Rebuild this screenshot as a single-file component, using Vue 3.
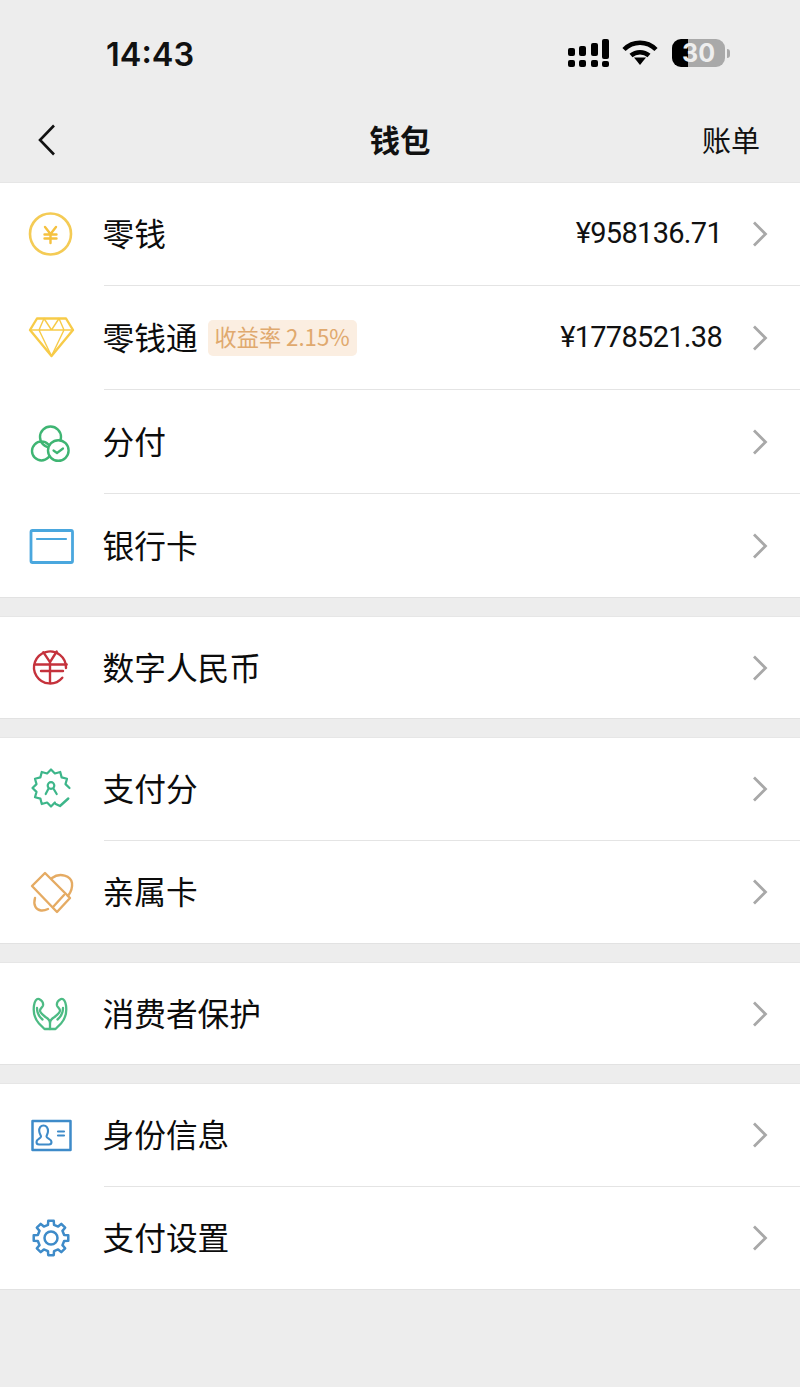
<script setup>
const groups = [
  [
    { icon: 'coin', label: '零钱', value: '¥958136.71' },
    { icon: 'diamond', label: '零钱通', tag: '收益率 2.15%', value: '¥1778521.38' },
    { icon: 'fenfu', label: '分付' },
    { icon: 'card', label: '银行卡' },
  ],
  [{ icon: 'rmb', label: '数字人民币' }],
  [
    { icon: 'badge', label: '支付分' },
    { icon: 'family', label: '亲属卡' },
  ],
  [{ icon: 'hands', label: '消费者保护' }],
  [
    { icon: 'id', label: '身份信息' },
    { icon: 'gear', label: '支付设置' },
  ],
]

function polar(cx, cy, r, deg) {
  const a = ((deg - 90) * Math.PI) / 180
  return `${(cx + r * Math.cos(a)).toFixed(2)} ${(cy + r * Math.sin(a)).toFixed(2)}`
}

// scalloped outline of the badge, open at the lower right for the tick
function badgePath() {
  const pts = []
  for (let d = 165; d <= 460; d += 15) {
    pts.push(polar(24, 23, (d / 15) % 2 === 0 ? 18.500 : 15, d))
  }
  return 'M' + pts.join('L')
}

function gearPath() {
  const pts = []
  for (let i = 0; i < 8; i++) {
    const c = i * 45
    pts.push(polar(24, 24, 13.5, c - 13), polar(24, 24, 17.5, c - 9), polar(24, 24, 17.5, c + 9), polar(24, 24, 13.5, c + 13))
  }
  return 'M' + pts.join('L') + 'Z'
}
</script>

<template>
  <div class="page">
    <header class="status">
      <span class="time">14:43</span>
      <div class="status-icons">
        <svg class="signal" width="41" height="29" viewBox="0 0 41 29">
          <rect x="0" y="9" width="7" height="8" rx="2" />
          <rect x="11" y="7" width="7" height="10" rx="2" />
          <rect x="23" y="4" width="7" height="13" rx="2" />
          <rect x="34" y="0" width="7" height="20" rx="2" />
          <rect x="0" y="21" width="7" height="7" rx="2" />
          <rect x="11" y="21" width="7" height="7" rx="2" />
          <rect x="23" y="21" width="7" height="7" rx="2" />
          <rect x="34" y="22" width="7" height="6" rx="2" />
        </svg>
        <svg class="wifi" width="36" height="27" viewBox="0 0 36 27">
          <path d="M2 10.5C11 1.5 25 1.500 34 10.500" fill="none" stroke="#000" stroke-width="4.500" />
          <path d="M9 16.500C14 12 22 12 27 16.500" fill="none" stroke="#000" stroke-width="4.500" />
          <path d="M12 18.500L24 18.500L18 26Z" />
        </svg>
        <div class="battery"><span>30</span></div>
        <i class="nub" />
      </div>
    </header>

    <nav class="nav">
      <svg class="back" width="20" height="32" viewBox="0 0 20 32">
        <path d="M17 1.500L3 16L17 30.500" fill="none" stroke="#111" stroke-width="2.600" />
      </svg>
      <h1>钱包</h1>
      <span class="bill">账单</span>
    </nav>

    <section v-for="(group, g) in groups" :key="g" class="group">
      <div v-for="item in group" :key="item.label" class="row">
        <div class="icon">
          <svg width="48" height="48" viewBox="0 0 48 48" fill="none" stroke-linecap="round" stroke-linejoin="round">
            <g v-if="item.icon === 'coin'" stroke="#f4cb55">
              <circle cx="23.500" cy="24" r="20.500" stroke-width="2.600" />
              <path d="M18 17L23.500 24L29 17M17.500 24.500H29.500M17.500 28.500H29.500M23.500 24V33" stroke-width="2.400" stroke="#f5c13f" />
            </g>
            <g v-else-if="item.icon === 'diamond'" stroke="#f7cb48" stroke-width="1.800">
              <path d="M10 5.500H39L46 17L24.500 43L3 17Z" stroke-width="2.400" />
              <path d="M3 17H46M17 5.500L12 17L24.500 43L37 17L32 5.500M17 5.500L24.500 17L32 5.500" stroke-width="1.400" />
            </g>
            <g v-else-if="item.icon === 'fenfu'" stroke="#3fb573" stroke-width="2.400">
              <circle cx="23.500" cy="20" r="10.500" />
              <circle cx="14.500" cy="34" r="9.500" />
              <circle cx="31.300" cy="33.500" r="10.300" fill="#fff" />
              <path d="M26.500 33.500L30 36L36 31.500" stroke-width="2.200" />
            </g>
            <g v-else-if="item.icon === 'card'" stroke="#4aa7de">
              <rect x="4" y="9.500" width="41.500" height="32" rx="1.500" stroke-width="2.800" stroke-linecap="butt" />
              <path d="M10 18H39" stroke-width="2.200" />
            </g>
            <g v-else-if="item.icon === 'rmb'" stroke="#c5323c" stroke-width="2.400">
              <path d="M35.300 33.700A16 16 0 1 1 39 24" />
              <path d="M16.300 8.200L23 18.200L29.700 7.500M8 20.500H39.700M14 27H36M23 18.200V38" />
            </g>
            <g v-else-if="item.icon === 'badge'" stroke="#3db68a" stroke-width="2.200">
              <path :d="badgePath()" />
              <circle cx="24" cy="20.500" r="3.300" />
              <path d="M21.300 24L18.700 29M26.700 24L29.700 29" />
              <path d="M28.700 39L33 41L41.300 33.500" stroke-width="2.400" />
            </g>
            <g v-else-if="item.icon === 'family'" stroke="#e5ab63" stroke-width="2.400">
              <path d="M18 5L5 18L30 44L43 30Z" />
              <path d="M26 39L37 27" />
              <path d="M25 10C33 4 44 8 45 15C45.500 19 44 24 41 28" />
              <path d="M8 30C6 37 9 42 14 42.500C17 42.800 19 42 21 41" />
            </g>
            <g v-else-if="item.icon === 'hands'" stroke="#4dbb84" stroke-width="2.300">
              <path d="M23 39H17.500L12 33.500C8 29 6 22.500 7 15.500C7.500 11.500 9.500 8 12 9C15 10.500 16.500 13 16 15.500C15.500 17.500 13 18 13 20.500C13 23 16 25 18.500 27C21 28.500 23 30 23 33ZM10 18C10 23 12.500 27 15.500 29.500" />
              <path d="M23 39H28.500L34 33.500C38 29 40 22.500 39 15.500C38.500 11.500 36.500 8 34 9C31 10.500 29.500 13 30 15.500C30.500 17.500 33 18 33 20.500C33 23 30 25 27.500 27C25 28.500 23 30 23 33M36 18C36 23 33.500 27 30.500 29.500" />
            </g>
            <g v-else-if="item.icon === 'id'" stroke="#3e8bc9">
              <rect x="5.500" y="10" width="38" height="29" stroke-width="2.500" stroke-linecap="butt" />
              <path d="M16.500 14.500C13.500 14.500 12 17 12.200 20C12.400 23 14 24 14 25.500C14 27.500 9.500 28 9.500 31C9.500 33 10.500 33.500 12 33.500H22C23.500 33.500 24.500 33 24.500 31C24.500 28 19.500 27.500 19.500 25.500C19.500 24 21 23 21 20C21 17 19.500 14.500 16.500 14.500Z" stroke-width="2.100" />
              <path d="M31 20.500H37M31 24.500H37" stroke-width="2.200" />
            </g>
            <g v-else-if="item.icon === 'gear'" stroke="#3e8bc9" stroke-width="2.500">
              <path :d="gearPath()" />
              <circle cx="24" cy="24" r="6.500" />
            </g>
          </svg>
        </div>
        <div class="body">
          <span class="label">{{ item.label }}</span>
          <span v-if="item.tag" class="tag">{{ item.tag }}</span>
          <span v-if="item.value" class="value">{{ item.value }}</span>
          <svg class="chevron" width="18" height="28" viewBox="0 0 18 28">
            <path d="M3 2.500L14.500 14L3 25.500" fill="none" stroke="#a8a8a8" stroke-width="2.800" />
          </svg>
        </div>
      </div>
    </section>
  </div>
</template>

<style scoped>
.page {
  height: 1387px;
  background: #ededed;
  overflow: hidden;
  font-family: "Noto Sans CJK SC", "Noto Sans", sans-serif;
  color: #111;
}

.status {
  height: 100px;
  display: flex;
  justify-content: space-between;
  align-items: flex-start;
  padding: 0 70px 0 106px;
}

.time {
  margin-top: 35px;
  font-family: Inter, sans-serif;
  font-size: 32.500px;
  font-weight: 600;
  line-height: 40px;
  color: #111;
}

.status-icons {
  display: flex;
  align-items: flex-start;
  margin-top: 39px;
}

.signal { margin-right: 13px; }
.wifi { margin-right: 14px; margin-top: 0; }

.battery {
  width: 53px;
  height: 28px;
  border-radius: 9px;
  background: linear-gradient(90deg, #000 0 16px, #a9a9a9 16px);
  display: flex;
  align-items: center;
  justify-content: center;
  font-family: Inter, sans-serif;
  font-size: 25px;
  font-weight: 700;
  color: #eee;
}

.nub {
  width: 3px;
  height: 9px;
  margin: 10px 0 0 2px;
  border-radius: 0 3px 3px 0;
  background: #a9a9a9;
}

.nav {
  height: 82px;
  display: flex;
  align-items: center;
  justify-content: space-between;
  padding: 0 40px 0 37px;
  position: relative;
}

.back { margin-top: -3px; }

.nav h1 {
  position: absolute;
  left: 0;
  right: 0;
  top: 0;
  margin: 0;
  text-align: center;
  font-size: 30.500px;
  font-weight: 700;
  line-height: 78px;
}

.bill {
  font-size: 29px;
  line-height: 78px;
  margin-bottom: 4px;
}

.group {
  background: #fff;
  border-top: 1px solid #e6e6e6;
  border-bottom: 1px solid #e2e2e2;
  margin-bottom: 18px;
}

.row {
  height: 104px;
  display: flex;
}

.group .row:first-child { height: 102px; }
.group .row:nth-child(2):last-child { height: 103px; }
.group .row:first-child:last-child { height: 101px; }

.icon {
  width: 104px;
  flex-shrink: 0;
  display: flex;
  align-items: center;
  padding-left: 27px;
  box-sizing: border-box;
}

.body {
  flex: 1;
  display: flex;
  align-items: center;
  padding-right: 31px;
}

.row + .row .body { border-top: 1px solid #e4e4e4; }

.label {
  margin: -4px 0 0 -1.500px;
  font-size: 31.700px;
  line-height: 40px;
  color: #0c0c0c;
}

.tag {
  margin-left: 10px;
  height: 32px;
  padding: 0 7px 4px;
  border-radius: 5px;
  background: #fbeee1;
  color: #e0a96e;
  font-size: 22.200px;
  line-height: 32px;
}

.value {
  margin: -2px 0 0 auto;
  font-family: Roboto, sans-serif;
  font-size: 29px;
  line-height: 40px;
  letter-spacing: -0.7px;
  color: #111;
}

.chevron {
  margin-left: auto;
}

.value + .chevron {
  margin-left: 29px;
}
</style>

<style>
html, body { background: #ededed; }
</style>
